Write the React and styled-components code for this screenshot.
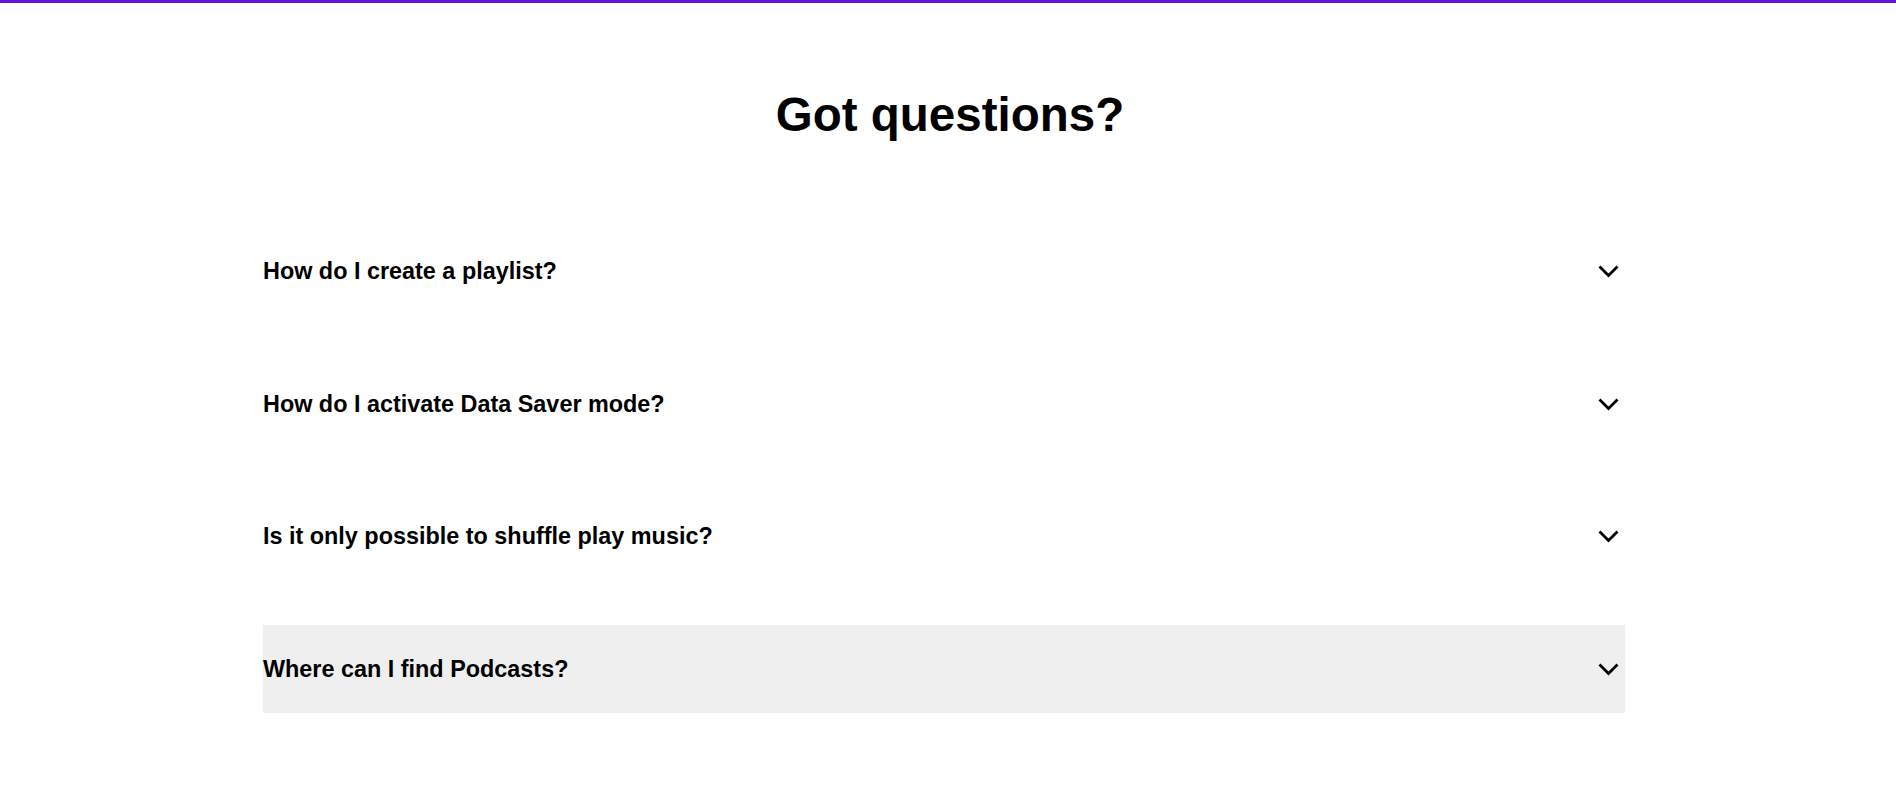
import React from "react";
import styled, { createGlobalStyle } from "styled-components";

const questions = [
  "How do I create a playlist?",
  "How do I activate Data Saver mode?",
  "Is it only possible to shuffle play music?",
  "Where can I find Podcasts?",
];

const Global = createGlobalStyle`
  body {
    margin: 0;
    background: #ffffff;
    font-family: "Liberation Sans", Arial, sans-serif;
  }
`;

export default function App() {
  return (
    <>
      <Global />
      <Section>
        <Title>Got questions?</Title>
        <List>
          {questions.map((q, i) => (
            <Row key={q} active={i === questions.length - 1}>
              <Question>{q}</Question>
              <Chevron width="24" height="24" viewBox="0 0 24 24">
                <polyline points="2.5,7.5 11.5,16.5 20.5,7.5" />
              </Chevron>
            </Row>
          ))}
        </List>
      </Section>
    </>
  );
}

const Section = styled.section`
  min-height: 791px;
  box-sizing: border-box;
  border-top: 3px solid #6016d8;
  padding: 84px 8px 0 0;
  color: #000000;
`;

const Title = styled.h2`
  margin: 0 0 85px;
  padding-left: 12px;
  text-align: center;
  font-size: 47.5px;
  font-weight: 700;
  line-height: 55px;
`;

const List = styled.div`
  width: 1362px;
  margin: 0 auto;
  display: flex;
  flex-direction: column;
  gap: 44.6px;
`;

const Row = styled.div`
  height: 88px;
  display: flex;
  align-items: center;
  justify-content: space-between;
  background: ${(p) => (p.active ? "#efefef" : "transparent")};
  cursor: pointer;
`;

const Question = styled.h3`
  margin: 0;
  font-size: 23.4px;
  font-weight: 700;
  line-height: 1.2;
`;

const Chevron = styled.svg`
  margin-right: 4px;
  fill: none;
  stroke: #000000;
  stroke-width: 2.8;
  stroke-linecap: butt;
`;
